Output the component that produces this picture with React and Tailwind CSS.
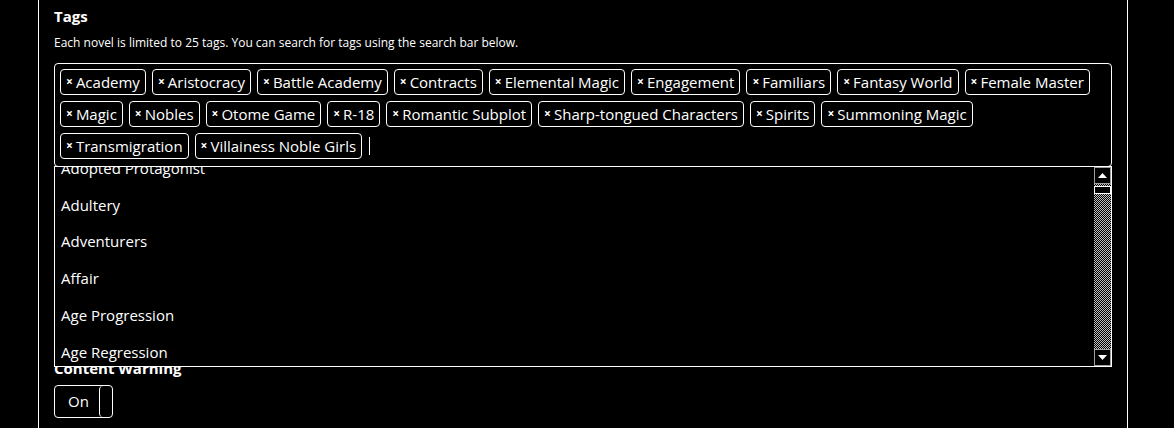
import React from "react";

const tags = [
  "Academy","Aristocracy","Battle Academy","Contracts","Elemental Magic","Engagement","Familiars","Fantasy World","Female Master",
  "Magic","Nobles","Otome Game","R-18","Romantic Subplot","Sharp-tongued Characters","Spirits","Summoning Magic",
  "Transmigration","Villainess Noble Girls",
];

const options = ["Adopted Protagonist","Adultery","Adventurers","Affair","Age Progression","Age Regression","Age Gap"];

function Tag({ label }) {
  return (
    <div className="h-[26px] flex items-center border border-white rounded-[4px] pl-[5px] pr-[5px] text-[15px] leading-none text-white">
      <span className="text-[12px] font-bold mr-[3px] leading-none">×</span>
      <span>{label}</span>
    </div>
  );
}

function ScrollBtn({ up }) {
  return (
    <div className="h-[17px] w-[17px] border border-[#a0a0a0] bg-black flex items-center justify-center">
      <svg width="9" height="5" viewBox="0 0 9 5">
        {up ? <polygon points="4.5,0 9,5 0,5" fill="#fff" /> : <polygon points="0,0 9,0 4.5,5" fill="#fff" />}
      </svg>
    </div>
  );
}

export default function App() {
  return (
    <div className="w-[1174px] h-[428px] bg-black overflow-hidden text-white" style={{ fontFamily: '"Open Sans", "Noto Sans", sans-serif' }}>
      <div className="ml-[38px] w-[1090px] h-[428px] border-l border-r border-white pl-[15px] pr-[15px] pt-[4px]">
        <div className="text-[15px] font-bold leading-[24px]">Tags</div>
        <div className="text-[12px] leading-[16px] mt-[7px]">Each novel is limited to 25 tags. You can search for tags using the search bar below.</div>
        <div className="relative mt-[12px] w-[1058px]">
          <div className="border border-white rounded-[4px] pl-[5px] pr-[12px] pt-[5px] pb-[7px] h-[104px]">
            <div className="flex flex-wrap gap-x-[6px] gap-y-[6px]">
              {tags.map((t) => (
                <Tag key={t} label={t} />
              ))}
              <div className="h-[26px] flex items-center pl-[1px]">
                <div className="w-[1px] h-[18px] bg-white" />
              </div>
            </div>
          </div>
          <div className="absolute left-0 top-[103px] w-[1058px] h-[201px] border border-white bg-black z-10 flex">
            <div className="flex-1 overflow-hidden">
              <div className="-mt-[17px]">
                {options.map((o) => (
                  <div key={o} className="h-[36.8px] flex items-center pl-[6px] text-[15px] leading-none">
                    {o}
                  </div>
                ))}
              </div>
            </div>
            <div className="w-[17px] flex flex-col bg-[repeating-conic-gradient(#c0c0c0_0_25%,#000_0_50%)] bg-[length:2px_2px]">
              <ScrollBtn up />
              <div className="mt-[2px] h-[8px] border border-white bg-black" />
              <div className="flex-1" />
              <ScrollBtn />
            </div>
          </div>
        </div>
        <div className="text-[15px] font-bold leading-[20px] mt-[191px]">Content Warning</div>
        <div className="mt-[7px] w-[59px] h-[33px] border border-white rounded-[4px] flex items-center">
          <span className="text-[15px] pl-[13px] w-[45px]">On</span>
          <div className="h-[31px] w-[13px] border-l border-white rounded-[4px]" />
        </div>
      </div>
    </div>
  );
}
